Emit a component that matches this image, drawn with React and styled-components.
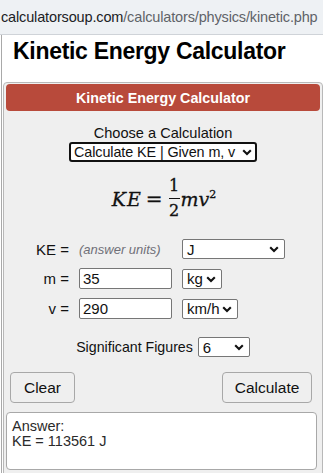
import React from "react";
import styled, { createGlobalStyle } from "styled-components";

const Global = createGlobalStyle`
  html, body { margin: 0; padding: 0; background: #ffffff; }
  body { font-family: "Liberation Sans", Arial, sans-serif; color: #000; }
  * { box-sizing: border-box; }
`;

const Root = styled.div`
  width: 323px;
  height: 473px;
  overflow: hidden;
  display: flex;
  flex-direction: column;
`;

const UrlBar = styled.div`
  height: 35px;
  flex: none;
  background: #eef1f4;
  border-bottom: 1px solid #cfd3d8;
  padding: 7px 0 0 1px;
  font-family: "Liberation Sans", Arial, sans-serif;
  font-size: 14.5px;
  letter-spacing: -0.15px;
  line-height: 20px;
  white-space: nowrap;
`;

const Host = styled.span`
  color: #202124;
`;
const Path = styled.span`
  color: #5f6368;
`;

const Page = styled.div`
  flex: 1;
  margin-left: 1px;
  border-left: 1px solid #a9a9a9;
  display: flex;
  flex-direction: column;
`;

const Heading = styled.h1`
  margin: 2px 0 0 11px;
  font-size: 23px;
  line-height: 28px;
  font-weight: bold;
  letter-spacing: -0.3px;
  color: #000;
`;

const Panel = styled.div`
  margin: 17px 0 0 1px;
  border: 1px solid #b8b8b8;
  border-radius: 4px 4px 0 0;
  background: #efefef;
  padding: 1px 1px 3px 1px;
  flex: 1;
  display: flex;
  flex-direction: column;
`;

const TitleBar = styled.div`
  margin: 0 1px;
  height: 27px;
  background: #b84a3b;
  border-radius: 4px;
  color: #fff;
  font-weight: bold;
  font-size: 14.3px;
  display: flex;
  align-items: center;
  justify-content: center;
`;

const ChooseBlock = styled.div`
  margin-top: 14px;
  display: flex;
  flex-direction: column;
  align-items: center;
`;

const ChooseLabel = styled.div`
  font-size: 14.6px;
  line-height: 17px;
  color: #111;
`;

const SelectBox = styled.div`
  position: relative;
  display: inline-flex;
  align-items: center;
  width: ${(p) => p.$w}px;
  height: ${(p) => p.$h || 20}px;
  background: #fff;
  border: ${(p) => (p.$focus ? "2px solid #111" : "1px solid #767676")};
  border-radius: ${(p) => (p.$focus ? "3px" : "2px")};
  padding-left: ${(p) => (p.$focus ? "3px" : "4px")};
  font-size: ${(p) => (p.$focus ? "14.4px" : "15px")};
  letter-spacing: ${(p) => (p.$focus ? "-0.1px" : "0")};
  color: #111;
  white-space: nowrap;
  overflow: hidden;
`;

const Chevron = styled.svg`
  position: absolute;
  right: ${(p) => p.$r || 5}px;
  top: 50%;
  margin-top: -3px;
`;

const Select = ({ w, h, focus, r, children }) => (
  <SelectBox $w={w} $h={h} $focus={focus}>
    {children}
    <Chevron $r={r} width="10" height="7" viewBox="0 0 10 7">
      <path d="M1.2 1.2 L5 5 L8.8 1.2" fill="none" stroke="#111" strokeWidth="2.1" />
    </Chevron>
  </SelectBox>
);

const Formula = styled.div`
  margin-top: 16px;
  display: flex;
  justify-content: center;
  align-items: center;
  font-family: "DejaVu Serif", "Liberation Serif", serif;
  font-size: 19px;
  color: #111;
  padding-left: 2px;
  -webkit-text-stroke: 0.3px #111;
`;

const MathVar = styled.span`
  font-style: italic;
  letter-spacing: ${(p) => p.$ls || 0}px;
`;

const Eq = styled.span`
  margin: 0 5px 0 4px;
  font-size: 20px;
`;

const Fraction = styled.span`
  display: inline-flex;
  flex-direction: column;
  align-items: center;
  font-size: 16px;
  line-height: 16px;
  padding: 0 1px;
`;

const FracLine = styled.span`
  width: 11px;
  height: 1px;
  background: #111;
  margin: 4px 0;
`;

const Sup = styled.sup`
  font-style: normal;
  font-size: 11px;
  vertical-align: 8px;
  line-height: 0;
`;

const FieldGrid = styled.div`
  margin-top: 20px;
  display: grid;
  grid-template-columns: 64px 93px auto;
  column-gap: 10px;
  row-gap: 9px;
  align-items: center;
  justify-items: start;
`;

const Label = styled.div`
  justify-self: end;
  font-size: 15px;
  color: #111;
`;

const Hint = styled.div`
  font-size: 13px;
  font-style: italic;
  color: #6f6f78;
`;

const TextInput = styled.div`
  width: 93px;
  height: 21px;
  background: #fff;
  border: 1px solid #767676;
  border-radius: 2px;
  padding-left: 3px;
  font-size: 15px;
  display: flex;
  align-items: center;
  color: #111;
`;

const SigRow = styled.div`
  margin-top: 18px;
  display: flex;
  align-items: center;
  justify-content: center;
  gap: 5px;
  font-size: 14.2px;
  color: #111;
`;

const ButtonRow = styled.div`
  margin-top: 15px;
  padding: 0 9px 0 5px;
  display: flex;
  justify-content: space-between;
`;

const Button = styled.div`
  width: ${(p) => p.$w}px;
  height: 31px;
  border: 1px solid #a8a8a8;
  border-radius: 4px;
  background: #efefef;
  display: flex;
  align-items: center;
  justify-content: center;
  font-size: 15.5px;
  color: #111;
`;

const AnswerBox = styled.div`
  margin: 9px 4px 0 1px;
  height: 58px;
  background: #fff;
  border: 1px solid #a8a8a8;
  border-radius: 4px;
  padding: 6px 5px;
  font-size: 14.5px;
  line-height: 15px;
  color: #2a2a2a;
`;

const AnswerLine = styled.div`
  white-space: nowrap;
`;

export default function App() {
  return (
    <>
      <Global />
      <Root>
        <UrlBar>
          <Host>calculatorsoup.com</Host>
          <Path>/calculators/physics/kinetic.php</Path>
        </UrlBar>
        <Page>
          <Heading>Kinetic Energy Calculator</Heading>
          <Panel>
            <TitleBar>Kinetic Energy Calculator</TitleBar>
            <ChooseBlock>
              <ChooseLabel>Choose a Calculation</ChooseLabel>
              <Select w={188} focus r={3}>
                Calculate KE | Given m, v
              </Select>
            </ChooseBlock>
            <Formula>
              <MathVar $ls={1}>KE</MathVar>
              <Eq>=</Eq>
              <Fraction>
                <span>1</span>
                <FracLine />
                <span>2</span>
              </Fraction>
              <MathVar>
                mv<Sup>2</Sup>
              </MathVar>
            </Formula>
            <FieldGrid>
              <Label>KE =</Label>
              <Hint>(answer units)</Hint>
              <Select w={103}>J</Select>
              <Label>m =</Label>
              <TextInput>35</TextInput>
              <Select w={40}>kg</Select>
              <Label>v =</Label>
              <TextInput>290</TextInput>
              <Select w={56}>km/h</Select>
            </FieldGrid>
            <SigRow>
              Significant Figures
              <Select w={52}>6</Select>
            </SigRow>
            <ButtonRow>
              <Button $w={65}>Clear</Button>
              <Button $w={90}>Calculate</Button>
            </ButtonRow>
            <AnswerBox>
              <AnswerLine>Answer:</AnswerLine>
              <AnswerLine>KE = 113561 J</AnswerLine>
            </AnswerBox>
          </Panel>
        </Page>
      </Root>
    </>
  );
}
